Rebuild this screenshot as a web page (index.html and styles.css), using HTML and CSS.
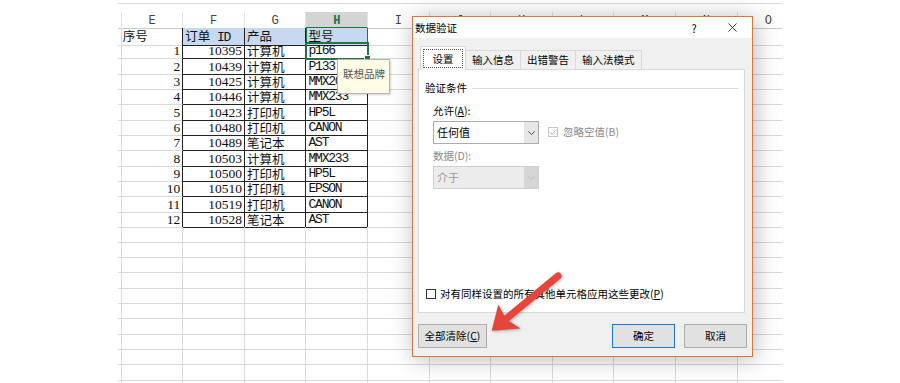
FILE: index.html
```html
<!DOCTYPE html>
<html lang="zh-CN">
<head>
<meta charset="utf-8">
<title>数据验证</title>
<link rel="stylesheet" href="styles.css">
</head>
<body>
<div class="sheet">
  <div class="hdr"><span></span><span>E</span><span>F</span><span>G</span><span class="sel">H</span><span>I</span><span>J</span><span>K</span><span>L</span><span>M</span><span>N</span><span class="last">O</span></div>
  <div class="row"><span></span><span class="eb">序号</span><span class="d hb">订单<span class="m"> ID</span></span><span class="d hb">产品</span><span class="d hb h0">型号</span><span></span><span></span><span></span><span></span><span></span><span></span><span></span></div>
  <div class="row"><span></span><span class="n eb">1</span><span class="n d">10395</span><span class="d">计算机</span><span class="m d act">p166</span><span></span><span></span><span></span><span></span><span></span><span></span><span></span></div>
  <div class="row"><span></span><span class="n eb">2</span><span class="n d">10439</span><span class="d">计算机</span><span class="m d">P133</span><span></span><span></span><span></span><span></span><span></span><span></span><span></span></div>
  <div class="row"><span></span><span class="n eb">3</span><span class="n d">10425</span><span class="d">计算机</span><span class="m d">MMX200</span><span></span><span></span><span></span><span></span><span></span><span></span><span></span></div>
  <div class="row"><span></span><span class="n eb">4</span><span class="n d">10446</span><span class="d">计算机</span><span class="m d">MMX233</span><span></span><span></span><span></span><span></span><span></span><span></span><span></span></div>
  <div class="row"><span></span><span class="n eb">5</span><span class="n d">10423</span><span class="d">打印机</span><span class="m d">HP5L</span><span></span><span></span><span></span><span></span><span></span><span></span><span></span></div>
  <div class="row"><span></span><span class="n eb">6</span><span class="n d">10480</span><span class="d">打印机</span><span class="m d">CANON</span><span></span><span></span><span></span><span></span><span></span><span></span><span></span></div>
  <div class="row"><span></span><span class="n eb">7</span><span class="n d">10489</span><span class="d">笔记本</span><span class="m d">AST</span><span></span><span></span><span></span><span></span><span></span><span></span><span></span></div>
  <div class="row"><span></span><span class="n eb">8</span><span class="n d">10503</span><span class="d">计算机</span><span class="m d">MMX233</span><span></span><span></span><span></span><span></span><span></span><span></span><span></span></div>
  <div class="row"><span></span><span class="n eb">9</span><span class="n d">10500</span><span class="d">打印机</span><span class="m d">HP5L</span><span></span><span></span><span></span><span></span><span></span><span></span><span></span></div>
  <div class="row"><span></span><span class="n eb">10</span><span class="n d">10510</span><span class="d">打印机</span><span class="m d">EPSON</span><span></span><span></span><span></span><span></span><span></span><span></span><span></span></div>
  <div class="row"><span></span><span class="n eb">11</span><span class="n d">10519</span><span class="d">打印机</span><span class="m d">CANON</span><span></span><span></span><span></span><span></span><span></span><span></span><span></span></div>
  <div class="row"><span></span><span class="n eb">12</span><span class="n d">10528</span><span class="d">笔记本</span><span class="m d">AST</span><span></span><span></span><span></span><span></span><span></span><span></span><span></span></div>
  <div class="row"><span></span><span></span><span></span><span></span><span></span><span></span><span></span><span></span><span></span><span></span><span></span><span></span></div>
  <div class="row"><span></span><span></span><span></span><span></span><span></span><span></span><span></span><span></span><span></span><span></span><span></span><span></span></div>
  <div class="row"><span></span><span></span><span></span><span></span><span></span><span></span><span></span><span></span><span></span><span></span><span></span><span></span></div>
  <div class="row"><span></span><span></span><span></span><span></span><span></span><span></span><span></span><span></span><span></span><span></span><span></span><span></span></div>
  <div class="row"><span></span><span></span><span></span><span></span><span></span><span></span><span></span><span></span><span></span><span></span><span></span><span></span></div>
  <div class="row"><span></span><span></span><span></span><span></span><span></span><span></span><span></span><span></span><span></span><span></span><span></span><span></span></div>
  <div class="row"><span></span><span></span><span></span><span></span><span></span><span></span><span></span><span></span><span></span><span></span><span></span><span></span></div>
  <div class="row"><span></span><span></span><span></span><span></span><span></span><span></span><span></span><span></span><span></span><span></span><span></span><span></span></div>
  <div class="row"><span></span><span></span><span></span><span></span><span></span><span></span><span></span><span></span><span></span><span></span><span></span><span></span></div>
  <div class="row"><span></span><span></span><span></span><span></span><span></span><span></span><span></span><span></span><span></span><span></span><span></span><span></span></div>
  <div class="row"><span></span><span></span><span></span><span></span><span></span><span></span><span></span><span></span><span></span><span></span><span></span><span></span></div>
</div>

<div class="tip">联想品牌</div>

<div class="dlg">
  <div class="tbar">
    <span class="ttl">数据验证</span>
    <span class="help">?</span>
    <svg class="close" viewBox="0 0 10 10"><path d="M0.5 0.5L9.5 9.5M9.5 0.5L0.5 9.5" stroke="#2b2b2b" stroke-width="1" fill="none"/></svg>
  </div>
  <div class="dbody">
    <div class="tabs">
      <div class="tab on"><span class="focus">设置</span></div>
      <div class="tab">输入信息</div>
      <div class="tab">出错警告</div>
      <div class="tab">输入法模式</div>
    </div>
    <div class="panel">
      <div class="grp">验证条件</div>
      <div class="lbl">允许(<u>A</u>):</div>
      <div class="crow">
        <div class="combo"><span class="v">任何值</span><span class="dd"><svg class="chev" viewBox="0 0 7 4"><path d="M0.3 0.3L3.5 3.5L6.7 0.3" stroke="#444" stroke-width="0.9" fill="none"/></svg></span></div>
        <div class="chk"><svg class="cbox" viewBox="0 0 10 10"><rect x="0.5" y="0.5" width="9" height="9" fill="#fff" stroke="#c4c4c4"/><path d="M2 5.2L4.1 7.3L8.2 2.6" stroke="#a8a8a8" stroke-width="1" fill="none"/></svg><span>忽略空值(B)</span></div>
      </div>
      <div class="lbl dis">数据(D):</div>
      <div class="combo off"><span class="v">介于</span><span class="dd"><svg class="chev" viewBox="0 0 7 4"><path d="M0.3 0.3L3.5 3.5L6.7 0.3" stroke="#bbb" stroke-width="0.9" fill="none"/></svg></span></div>
      <div class="apply"><span class="box"></span><span>对有同样设置的所有其他单元格应用这些更改(<u>P</u>)</span></div>
    </div>
    <div class="btns">
      <button class="btn clr">全部清除(<u>C</u>)</button>
      <button class="btn ok">确定</button>
      <button class="btn">取消</button>
    </div>
  </div>
</div>

<svg class="arrow" viewBox="0 0 90 75">
  <line x1="78" y1="11" x2="27" y2="53" stroke="#e5453b" stroke-width="7" stroke-linecap="round"/>
  <polygon points="11.7,65.7 18.3,39.5 26,54 40.5,63.5" fill="#e5453b"/>
</svg>
</body>
</html>
```
FILE: styles.css
```css
html, body {
  margin: 0;
  height: 383px;
  overflow: hidden;
  background: #fff;
}
body {
  position: relative;
  font-family: "Noto Sans CJK SC", sans-serif;
}

/* ---------- spreadsheet ---------- */
.sheet {
  margin: 3px 0 0 118px;
  width: 664px;
  border-top: 1px solid #d9d9d9;
  padding-top: 8px;
}
.hdr, .row {
  display: grid;
  grid-template-columns: 3.7px repeat(10, 61.6px) 1fr;
}
.hdr { height: 16px; }
.hdr span {
  box-sizing: border-box;
  border-right: 1px solid #e3e3e3;
  border-bottom: 1px solid #c9c9c9;
  padding-top: 4px;
  font: 12px/11px "Liberation Mono", monospace;
  color: #444;
  text-align: center;
}
.hdr .sel {
  background: #d4d4d4;
  color: #217346;
  font-weight: bold;
  border-bottom: 2px solid #217346;
}
.hdr .last {
  text-align: left;
  padding-left: 27px;
  border-right: 0;
}
.row { height: 15.333px; }
.row > span {
  box-sizing: border-box;
  border-right: 1px solid #dadada;
  border-bottom: 1px solid #dadada;
  font-size: 12.5px;
  line-height: 15px;
  white-space: nowrap;
  padding-left: 1px;
  color: #111;
}
.row > span:last-child { border-right: 0; }
.row > span.eb { border-right-color: #222; }
.row > span.d {
  border-right-color: #222;
  border-bottom-color: #222;
  padding-left: 2px;
}
.row > span.hb { background: #c6d9f0; }
.row > span.h0 {
  border-right-color: #217346;
  box-shadow: inset 1px 0 0 #217346;
}
.n {
  font-family: "Liberation Serif", serif;
  text-align: right;
}
.row > span.n {
  font-size: 13.5px;
  padding-right: 2px;
  padding-left: 0;
}
.m {
  font-family: "Liberation Mono", monospace;
  font-size: 13px;
  letter-spacing: -1.2px;
}
.row > span.m { font-size: 13px; }
.row > span.act {
  position: relative;
  outline: 2px solid #217346;
  outline-offset: -1px;
}
.row > span.act::after {
  content: "";
  position: absolute;
  right: -4px;
  bottom: -4px;
  width: 5px;
  height: 5px;
  background: #217346;
  border: 1px solid #fff;
}

/* ---------- tooltip ---------- */
.tip {
  position: absolute;
  left: 337px;
  top: 59px;
  width: 53px;
  height: 35px;
  box-sizing: border-box;
  background: #fffde6;
  border: 1px solid #b4b4b4;
  box-shadow: 1px 1px 2px rgba(0, 0, 0, 0.18);
  padding: 7px 0 0 5px;
  font-size: 10.5px;
  line-height: 14px;
  color: #555;
  z-index: 2;
}

/* ---------- dialog ---------- */
.dlg {
  position: absolute;
  left: 412px;
  top: 16px;
  width: 341px;
  height: 341px;
  box-sizing: border-box;
  border: 1px solid #d6783f;
  background: #f0f0f0;
  box-shadow: 2px 2px 22px rgba(0, 0, 0, 0.28);
  display: flex;
  flex-direction: column;
  font-family: "Noto Sans CJK SC", sans-serif;
  font-size: 10.5px;
  line-height: 12px;
  color: #000;
  z-index: 3;
}
.tbar {
  height: 22px;
  background: #fff;
  display: flex;
  align-items: center;
  padding-left: 2px;
}
.help {
  margin-left: auto;
  width: 10px;
  text-align: center;
  font-size: 11px;
}
.close {
  width: 9px;
  height: 9px;
  margin-left: 29px;
  margin-right: 15px;
}
.dbody {
  flex: 1;
  display: flex;
  flex-direction: column;
  padding: 8px 5px 8px 5px;
}
.tabs {
  display: flex;
  align-items: flex-end;
  height: 24px;
  margin: 0 0 -1px 2px;
}
.tab {
  height: 20px;
  box-sizing: border-box;
  padding: 0 6px;
  border-top: 1px solid #d9d9d9;
  border-right: 1px solid #d9d9d9;
  line-height: 18px;
  background: #f0f0f0;
}
.tab.on {
  height: 24px;
  width: 46px;
  padding: 2px;
  background: #fff;
  border-left: 1px solid #d9d9d9;
  position: relative;
  z-index: 1;
}
.focus {
  display: block;
  height: 100%;
  box-sizing: border-box;
  border: 1px dotted #555;
  text-align: center;
  line-height: 18px;
}
.panel {
  height: 244px;
  box-sizing: border-box;
  background: #fff;
  border: 1px solid #d9d9d9;
  margin-right: 2px;
  padding: 0 5px 0 6px;
  display: flex;
  flex-direction: column;
}
.grp {
  display: flex;
  align-items: center;
  gap: 5px;
  margin-top: 12px;
}
.grp::after {
  content: "";
  flex: 1;
  border-top: 1px solid #dcdcdc;
}
.lbl { margin: 11px 0 0 8px; }
.lbl.dis { margin-top: 6px; color: #8a8a8a; }
.crow {
  display: flex;
  align-items: center;
  margin: 4px 0 0 8px;
}
.combo {
  width: 106px;
  height: 23px;
  box-sizing: border-box;
  border: 1px solid #adadad;
  background: #fff;
  display: flex;
  font-size: 11px;
}
.combo .v {
  flex: 1;
  padding-left: 3px;
  line-height: 21px;
}
.combo .dd {
  width: 14px;
  background: #e6e6e6;
  display: flex;
  align-items: center;
  justify-content: center;
}
.chev { width: 7px; height: 4px; }
.combo.off {
  margin: 4px 0 0 8px;
  background: #ececec;
  border-color: #cfcfcf;
  color: #9a9a9a;
}
.combo.off .dd { background: #d5d5d5; }
.chk {
  display: flex;
  align-items: center;
  gap: 5px;
  margin: -2px 0 0 9px;
  color: #8a8a8a;
}
.cbox { width: 10px; height: 10px; }
.apply {
  margin: auto 0 12px 1px;
  display: flex;
  align-items: center;
  gap: 4px;
}
.apply .box {
  width: 10px;
  height: 10px;
  box-sizing: border-box;
  border: 1px solid #333;
  background: #fff;
}
.btns {
  display: flex;
  gap: 9px;
  margin-top: 11px;
}
.btn {
  height: 24px;
  width: 63px;
  padding: 0;
  font: inherit;
  color: #000;
  background: #e1e1e1;
  border: 1px solid #adadad;
}
.btn.clr { width: 69px; margin-right: auto; }
.btn.ok { border-color: #1a78d2; }

/* ---------- annotation arrow ---------- */
.arrow {
  position: absolute;
  left: 480px;
  top: 265px;
  width: 90px;
  height: 75px;
  z-index: 4;
  filter: drop-shadow(1px 1px 1.5px rgba(0, 0, 0, 0.3));
}
```
